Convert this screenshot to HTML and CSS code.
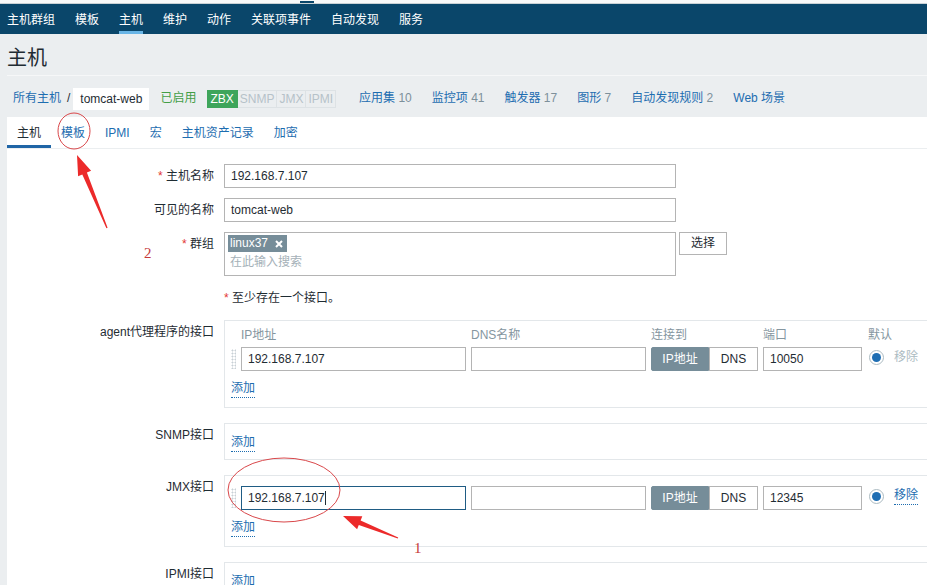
FILE: index.html
```html
<!DOCTYPE html>
<html lang="zh-CN">
<head>
<meta charset="utf-8">
<title>主机</title>
<link rel="stylesheet" href="styles.css">
</head>
<body>
<div class="topstrip"><span class="toggle"></span></div>
<nav class="topnav">
  <a>主机群组</a><a>模板</a><a class="active">主机</a><a>维护</a><a>动作</a><a>关联项事件</a><a>自动发现</a><a>服务</a>
</nav>
<header class="page-header"><h1>主机</h1></header>
<div class="crumbs">
  <a class="link">所有主机</a><span class="sep">/</span><span class="current">tomcat-web</span>
  <span class="enabled">已启用</span>
  <span class="badges"><span class="badge on">ZBX</span><span class="badge">SNMP</span><span class="badge">JMX</span><span class="badge">IPMI</span></span>
  <a class="link item">应用集 <span class="count">10</span></a>
  <a class="link item">监控项 <span class="count">41</span></a>
  <a class="link item">触发器 <span class="count">17</span></a>
  <a class="link item">图形 <span class="count">7</span></a>
  <a class="link item">自动发现规则 <span class="count">2</span></a>
  <a class="link item">Web 场景</a>
</div>

<main class="panel">
  <div class="tabs">
    <a class="tab active">主机</a><a class="tab">模板</a><a class="tab">IPMI</a><a class="tab">宏</a><a class="tab">主机资产记录</a><a class="tab">加密</a>
  </div>
  <div class="form">
    <div class="row">
      <label class="lbl"><span class="req">*</span> 主机名称</label>
      <div class="field wide">192.168.7.107</div>
    </div>
    <div class="row">
      <label class="lbl">可见的名称</label>
      <div class="field wide">tomcat-web</div>
    </div>
    <div class="row">
      <label class="lbl"><span class="req">*</span> 群组</label>
      <div class="group-cell">
        <div class="multiselect">
          <span class="tag">linux37<svg class="tag-x" width="8" height="8" viewBox="0 0 8 8"><path d="M1 1L7 7M7 1L1 7" stroke="#fff" stroke-width="2"/></svg></span>
          <div class="placeholder">在此输入搜索</div>
        </div>
        <button class="btn">选择</button>
      </div>
    </div>
    <div class="row">
      <span></span>
      <div class="note"><span class="req">*</span> 至少存在一个接口。</div>
    </div>

    <div class="row iface-row">
      <label class="lbl">agent代理程序的接口</label>
      <div class="iface iface-agent">
        <div class="igrid ihead">
          <span></span><span>IP地址</span><span>DNS名称</span><span>连接到</span><span>端口</span><span>默认</span>
        </div>
        <div class="igrid">
          <span class="handle"></span>
          <div class="field">192.168.7.107</div>
          <div class="field"></div>
          <div class="seg"><span class="on">IP地址</span><span>DNS</span></div>
          <div class="field">10050</div>
          <div class="def"><span class="radio"></span><span class="remove disabled">移除</span></div>
        </div>
        <a class="action add">添加</a>
      </div>
    </div>

    <div class="row iface-row">
      <label class="lbl">SNMP接口</label>
      <div class="iface iface-empty">
        <a class="action">添加</a>
      </div>
    </div>

    <div class="row iface-row">
      <label class="lbl">JMX接口</label>
      <div class="iface iface-plain">
        <div class="igrid">
          <span class="handle"></span>
          <div class="field focused">192.168.7.107<span class="caret"></span></div>
          <div class="field"></div>
          <div class="seg"><span class="on">IP地址</span><span>DNS</span></div>
          <div class="field">12345</div>
          <div class="def"><span class="radio"></span><a class="action">移除</a></div>
        </div>
        <a class="action add">添加</a>
      </div>
    </div>

    <div class="row iface-row">
      <label class="lbl">IPMI接口</label>
      <div class="iface iface-empty">
        <a class="action">添加</a>
      </div>
    </div>
  </div>
</main>

<svg class="annot" width="927" height="585" viewBox="0 0 927 585">
  <ellipse cx="74" cy="131" rx="16" ry="18" fill="none" stroke="#d9474a" stroke-width="1"/>
  <polygon points="77,155 91.1,170.8 86.9,172.5 107.6,227.8 106.4,228.2 82.3,174.4 78.1,176.2" fill="#ec2a2a"/>
  <text x="144" y="258" class="num">2</text>
  <ellipse cx="284" cy="490" rx="56" ry="32" fill="none" stroke="#d9474a" stroke-width="1"/>
  <polygon points="343,516 362.3,516.2 360.6,520.4 398.2,537.5 397.8,538.5 358.8,525 357.1,529.2" fill="#ec2a2a"/>
  <text x="414" y="553" class="num">1</text>
</svg>
</body>
</html>
```

FILE: styles.css
```css
* { box-sizing: border-box; }

html, body {
  margin: 0;
  padding: 0;
  overflow: hidden;
}

body {
  width: 927px;
  height: 585px;
  position: relative;
  background: #ebeef0;
  color: #1f2c33;
  font: 12px/1.25 "Liberation Sans", "Noto Sans CJK SC", sans-serif;
}

a { text-decoration: none; cursor: pointer; }

.topstrip {
  height: 4px;
  background: #f8f9f9;
  border-bottom: 1px solid #c9d1d5;
  display: flex;
  align-items: flex-end;
  padding-left: 300px;
}
.toggle {
  width: 14px;
  height: 2px;
  background: #0a466a;
}

.topnav {
  height: 30px;
  background: #0a466a;
  display: flex;
  gap: 20px;
  padding-left: 7px;
}
.topnav a {
  color: #fff;
  height: 30px;
  padding-top: 5px;
  border-bottom: 3px solid transparent;
  display: flex;
  align-items: center;
}
.topnav a.active { border-bottom-color: #69b5e6; }

.page-header { height: 41px; }
.page-header h1 {
  margin: 0;
  padding: 12px 0 0 7px;
  font-size: 20px;
  line-height: 24px;
  font-weight: normal;
  color: #1f2c33;
}

.crumbs {
  height: 42px;
  margin-left: 7px;
  border-top: 1px solid #f6f7f8;
  padding: 4px 0 0 6px;
  display: flex;
  align-items: center;
}
.link { color: #1d6db0; }
.count { color: #7d909b; }
.sep { color: #1f2c33; margin: 0 3px 0 6px; }
.current {
  background: #fff;
  height: 22px;
  line-height: 22px;
  padding: 0 7px;
}
.enabled { color: #429e47; margin-left: 11px; }
.badges { display: flex; margin-left: 11px; }
.badge {
  height: 18px;
  line-height: 16px;
  padding: 0 2px;
  border: 1px solid #dde2e5;
  border-left: none;
  color: #b6c2c9;
  font-size: 12px;
}
.badge.on {
  background: #3ea55b;
  border-color: #3ea55b;
  color: #fff;
  padding: 0 3px;
}
.crumbs .item { margin-left: 20px; }
.badges + .item { margin-left: 23px; }

.panel {
  margin-left: 7px;
  background: #fff;
  height: 470px;
}

.tabs {
  display: flex;
  height: 32px;
  border-bottom: 1px solid #ebeef0;
}
.tab {
  height: 31px;
  padding: 4px 10px 0;
  border-bottom: 3px solid transparent;
  display: flex;
  align-items: center;
  color: #1d6db0;
}
.tab.active {
  color: #1f2c33;
  border-bottom-color: #1f65a6;
}

.form {
  padding-top: 15px;
  display: flex;
  flex-direction: column;
  gap: 10px;
}
.row {
  display: grid;
  grid-template-columns: 207px 1fr;
  column-gap: 10px;
  align-items: start;
}
.lbl {
  text-align: right;
  line-height: 24px;
  white-space: nowrap;
}
.req { color: #e33734; }

.field {
  height: 24px;
  border: 1px solid #b4b4b4;
  background: #fff;
  padding: 0 6px;
  line-height: 22px;
  white-space: nowrap;
  overflow: hidden;
}
.field.wide { width: 452px; }
.field.focused { border-color: #1f5c84; }
.caret {
  display: inline-block;
  width: 1px;
  height: 14px;
  background: #1f2c33;
  vertical-align: -3px;
}

.group-cell { display: flex; align-items: flex-start; gap: 3px; }
.multiselect {
  width: 452px;
  height: 44px;
  border: 1px solid #b4b4b4;
  padding: 2px 3px;
}
.tag {
  display: inline-flex;
  align-items: center;
  gap: 7px;
  height: 17px;
  padding: 0 4px 0 2px;
  background: #768d99;
  color: #fff;
}
.placeholder {
  margin: 1px 0 0 2px;
  line-height: 18px;
  color: #a5b1b8;
}
.btn {
  width: 48px;
  height: 23px;
  border: 1px solid #b4b4b4;
  background: #fff;
  color: #1f2c33;
  font: inherit;
  padding: 0;
}

.note { line-height: 24px; }

.iface-row { margin-top: 5px; }
.form .row:nth-child(5) { margin-top: 0; }

.iface {
  width: 760px;
  border: 1px solid #e3e7ea;
  padding: 10px 6px 7px;
}
.iface-agent { padding: 4px 6px 9px; }
.iface-plain { padding: 10px 6px 9px; }

.igrid {
  display: grid;
  grid-template-columns: 5px 225px 175px 107px 99px auto;
  column-gap: 5px;
  align-items: center;
}
.ihead {
  height: 20px;
  line-height: 20px;
  color: #8596a0;
  margin-bottom: 2px;
}
.ihead span:last-child { margin-left: 1px; }

.handle {
  height: 20px;
  background-image: radial-gradient(circle, #c8d0d5 0.8px, transparent 1.2px);
  background-size: 3px 3px;
}

.seg { display: flex; height: 24px; }
.seg span {
  border: 1px solid #b4b4b4;
  display: flex;
  align-items: center;
  justify-content: center;
  width: 49px;
}
.seg span.on {
  width: 58px;
  background: #768d99;
  border-color: #768d99;
  color: #fff;
  border-radius: 2px 0 0 2px;
}

.def {
  display: flex;
  align-items: center;
  gap: 10px;
  padding-left: 2px;
  margin-top: -4px;
}
.radio {
  width: 15px;
  height: 15px;
  border-radius: 50%;
  border: 1px solid #acbbc2;
  background: #fff;
  display: flex;
  align-items: center;
  justify-content: center;
}
.radio::after {
  content: "";
  width: 9px;
  height: 9px;
  border-radius: 50%;
  background: #1f6eb3;
}
.remove.disabled { color: #acbbc2; }

.action {
  display: inline-block;
  color: #1d6db0;
  line-height: 17px;
  border-bottom: 1px dotted #1d6db0;
}
.action.add { margin-top: 9px; }

.annot {
  position: absolute;
  left: 0;
  top: 0;
  pointer-events: none;
}
.annot .num {
  font-family: "Liberation Serif", serif;
  font-size: 15px;
  fill: #c63a3a;
}
```
